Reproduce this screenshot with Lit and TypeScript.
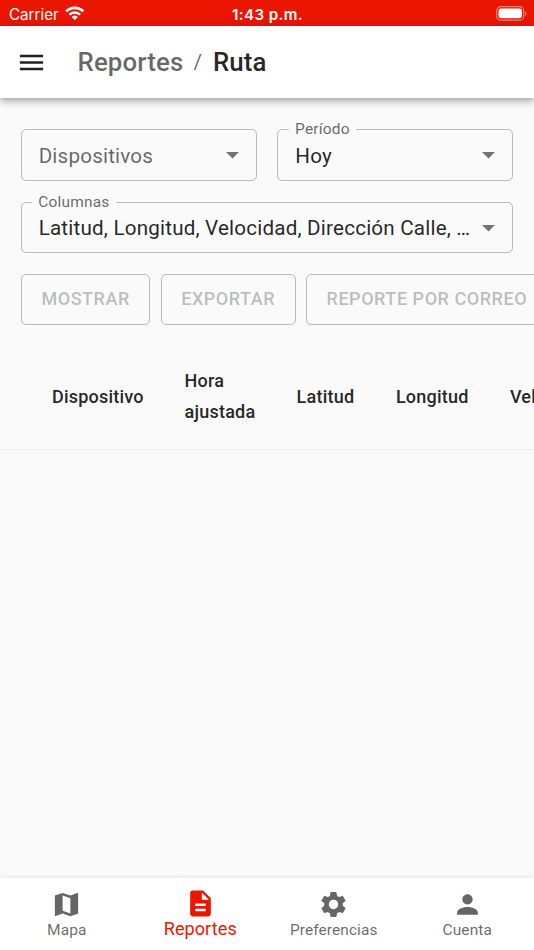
import { LitElement, html, css, svg, nothing } from "lit";
import { customElement, property } from "lit/decorators.js";
import { classMap } from "lit/directives/class-map.js";

const ICONS = {
  menu: "M3 18h18v-2H3v2zm0-5h18v-2H3v2zm0-7v2h18V6H3z",
  map: "m20.5 3-.16.03L15 5.1 9 3 3.36 4.9c-.21.07-.36.25-.36.48V20.500c0 .28.22.5.5.5l.16-.03L9 18.900l6 2.100 5.640-1.900c.21-.07.36-.25.36-.48V3.500c0-.28-.22-.5-.5-.5zM15 19l-6-2.110V5l6 2.110V19z",
  report: "M14 2H6c-1.100 0-1.990.9-1.990 2L4 20c0 1.100.89 2 1.990 2H18c1.100 0 2-.9 2-2V8l-6-6zm2 16H8v-2h8v2zm0-4H8v-2h8v2zm-3-5V3.500L18.500 9H13z",
  settings: "M19.140 12.940c.04-.3.060-.61.060-.94 0-.32-.02-.64-.07-.94l2.030-1.580c.18-.14.23-.41.12-.61l-1.920-3.320c-.12-.22-.37-.29-.59-.22l-2.390.96c-.5-.38-1.030-.7-1.620-.94l-.36-2.540c-.04-.24-.24-.41-.48-.41h-3.840c-.24 0-.43.17-.47.41l-.36 2.540c-.59.24-1.130.57-1.620.94l-2.390-.96c-.22-.08-.47 0-.59.22L2.740 8.870c-.12.21-.08.47.12.61l2.030 1.580c-.05.3-.09.63-.09.94s.02.64.07.94l-2.030 1.580c-.18.14-.23.41-.12.61l1.920 3.320c.12.22.37.29.59.22l2.390-.96c.5.38 1.030.7 1.620.94l.36 2.540c.05.24.24.41.48.41h3.840c.24 0 .44-.17.47-.41l.36-2.540c.59-.24 1.130-.56 1.620-.94l2.390.96c.22.08.47 0 .59-.22l1.920-3.320c.12-.22.07-.47-.12-.61l-2.010-1.580zM12 15.600c-1.980 0-3.600-1.620-3.600-3.600s1.620-3.600 3.600-3.600 3.600 1.620 3.600 3.600-1.620 3.600-3.600 3.600z",
  person: "M12 12c2.210 0 4-1.790 4-4s-1.790-4-4-4-4 1.790-4 4 1.790 4 4 4zm0 2c-2.670 0-8 1.340-8 4v2h16v-2c0-2.660-5.330-4-8-4z",
  arrow: "M7 10l5 5 5-5z",
};

const icon = (name: keyof typeof ICONS) =>
  html`<svg class="icon" viewBox="0 0 24 24" aria-hidden="true">${svg`<path d=${ICONS[name]}></path>`}</svg>`;

@customElement("status-bar")
class StatusBar extends LitElement {
  static styles = css`
    :host {
      display: grid;
      grid-template-columns: 1fr auto 1fr;
      align-items: center;
      height: 26px;
      padding: 0 8px 0 9px;
      box-sizing: border-box;
      background: #ea1600;
      color: #fff;
      font: 400 15.200px/26px Inter, "Liberation Sans", sans-serif;
    }
    .carrier { display: flex; align-items: center; gap: 6px; padding-top: 1px; }
    .wifi { width: 19.500px; height: 14.600px; display: block; margin-top: -2px; }
    .time { font-weight: 600; letter-spacing: 0.380px; padding-top: 2px; }
    .battery { justify-self: end; width: 31px; height: 15px; display: block; margin: -1px -0.500px 0 0; }
  `;
  render() {
    return html`
      <div class="carrier">
        <span>Carrier</span>
        <svg class="wifi" viewBox="0 0 20 15">
          <g fill="none" stroke="#fff" stroke-width="2.700">
            <path d="M1.200 5.500a12.600 12.600 0 0 1 17.600 0"></path>
            <path d="M4.500 8.900a7.900 7.900 0 0 1 11 0"></path>
          </g>
          <path fill="#fff" d="M6.700 11.200a4.800 4.800 0 0 1 6.600 0L10 14.500z"></path>
        </svg>
      </div>
      <span class="time">1:43 p.m.</span>
      <svg class="battery" viewBox="0 0 31 15">
        <rect x=".7" y=".7" width="27" height="13.400" rx="3.800" fill="none" stroke="#fff" stroke-opacity=".45" stroke-width="1.200"></rect>
        <rect x="2.500" y="2.500" width="23.400" height="9.800" rx="2.200" fill="#fff"></rect>
        <path d="M29.200 5.200c1.700.7 1.700 3.800 0 4.600z" fill="#fff" fill-opacity=".5"></path>
      </svg>
    `;
  }
}

@customElement("select-field")
class SelectField extends LitElement {
  @property() label = "";
  @property() value = "";
  static styles = css`
    :host { display: block; position: relative; min-width: 0; height: 51.600px; }
    .outline {
      position: absolute;
      inset: -8px 0 0;
      margin: 0;
      padding: 0 10.300px;
      border: 1.290px solid rgba(0, 0, 0, 0.25);
      border-radius: 5.200px;
      min-width: 0;
    }
    .outline.plain { top: 0; }
    legend {
      padding: 0 6.450px;
      height: 17px;
      font-size: 15.480px;
      line-height: 17px;
      letter-spacing: 0.180px;
      color: rgba(0, 0, 0, 0.6);
      white-space: nowrap;
    }
    .content {
      display: flex;
      align-items: center;
      height: 100%;
      box-sizing: border-box;
      padding: 0 9px 0 18px;
      gap: 2.500px;
    }
    .value {
      flex: 1;
      min-width: 0;
      overflow: hidden;
      text-overflow: ellipsis;
      white-space: nowrap;
      font-size: 20.640px;
      line-height: 30px;
      letter-spacing: 0.194px;
      padding-top: 1.600px;
      color: rgba(0, 0, 0, 0.87);
    }
    .placeholder { color: rgba(0, 0, 0, 0.6); }
    .icon { width: 31px; height: 31px; flex: none; fill: rgba(0, 0, 0, 0.54); }
  `;
  render() {
    const empty = !this.value;
    return html`
      <fieldset class=${classMap({ outline: true, plain: empty })}>
        ${empty ? nothing : html`<legend>${this.label}</legend>`}
      </fieldset>
      <div class="content">
        <span class=${classMap({ value: true, placeholder: empty })}>${this.value || this.label}</span>
        ${icon("arrow")}
      </div>
    `;
  }
}

@customElement("app-root")
class AppRoot extends LitElement {
  static styles = css`
    :host {
      display: flex;
      flex-direction: column;
      height: 950px;
      width: 534px;
      overflow: hidden;
      background: #fafafa;
      color: rgba(0, 0, 0, 0.87);
      font-family: Roboto, "Liberation Sans", sans-serif;
    }
    .icon { width: 31px; height: 31px; fill: currentColor; display: block; flex: none; }
    .toolbar {
      display: flex;
      align-items: center;
      height: 72.200px;
      flex: none;
      padding-left: 15.500px;
      gap: 31px;
      background: #fff;
      box-shadow: 0 2.600px 5.200px -1.300px rgba(0, 0, 0, 0.2), 0 5.200px 6.500px 0 rgba(0, 0, 0, 0.14),
        0 1.300px 13px 0 rgba(0, 0, 0, 0.12);
      z-index: 1;
    }
    .crumbs {
      display: flex;
      align-items: center;
      font-weight: 500;
      font-size: 25.800px;
      line-height: 41px;
      letter-spacing: 0.160px;
      padding-top: 1px;
    }
    .parent { color: rgba(0, 0, 0, 0.6); }
    .slash { font-weight: 400; font-size: 20.640px; margin: 0 10.700px 0 10.200px; color: rgba(0, 0, 0, 0.6); }
    .filters {
      display: grid;
      grid-template-columns: 1fr 1fr;
      gap: 21px 20.700px;
      padding: 31px 20.640px 0;
      flex: none;
    }
    .wide { grid-column: 1 / -1; }
    .actions { display: flex; gap: 10.400px; padding: 20.400px 0 0 20.900px; flex: none; }
    .action {
      flex: none;
      height: 51.600px;
      box-sizing: border-box;
      padding: 0 19.500px 2px;
      border: 1.290px solid rgba(0, 0, 0, 0.26);
      border-radius: 5.200px;
      background: none;
      color: rgba(0, 0, 0, 0.26);
      font: 500 18.060px/31px Roboto, "Liberation Sans", sans-serif;
      letter-spacing: 0.516px;
      text-transform: uppercase;
      white-space: nowrap;
    }
    .table-head {
      display: grid;
      grid-template-columns: 132.700px 112px 99.300px 114px 140px;
      align-items: center;
      flex: none;
      height: 103.700px;
      box-sizing: border-box;
      margin-top: 20.600px;
      padding-left: 31.300px;
      border-bottom: 1.290px solid #efefef;
      font-weight: 500;
      font-size: 18.060px;
      line-height: 30.960px;
      letter-spacing: 0.193px;
    }
    .cell { padding: 0 20.640px; }
    .space { flex: 1; }
    .nav {
      display: grid;
      grid-template-columns: repeat(4, 1fr);
      height: 72.300px;
      flex: none;
      background: #fff;
      box-shadow: 0 -1px 5px rgba(0, 0, 0, 0.08);
    }
    .tab {
      display: flex;
      flex-direction: column;
      align-items: center;
      padding-top: 11px;
      color: rgba(0, 0, 0, 0.6);
      font-size: 15.480px;
      line-height: 20px;
      letter-spacing: 0.080px;
    }
    .tab.selected { color: #ea1600; font-size: 18.060px; padding-top: 10px; }
  `;

  private tabs: { icon: keyof typeof ICONS; label: string; selected?: boolean }[] = [
    { icon: "map", label: "Mapa" },
    { icon: "report", label: "Reportes", selected: true },
    { icon: "settings", label: "Preferencias" },
    { icon: "person", label: "Cuenta" },
  ];

  render() {
    return html`
      <status-bar></status-bar>
      <header class="toolbar">
        ${icon("menu")}
        <div class="crumbs">
          <span class="parent">Reportes</span><span class="slash">/</span><span>Ruta</span>
        </div>
      </header>
      <section class="filters">
        <select-field label="Dispositivos"></select-field>
        <select-field label="Período" value="Hoy"></select-field>
        <select-field class="wide" label="Columnas" value="Latitud, Longitud, Velocidad, Dirección Calle, Kilometraje"></select-field>
      </section>
      <div class="actions">
        ${["Mostrar", "Exportar", "Reporte por correo"].map((t) => html`<button class="action" disabled>${t}</button>`)}
      </div>
      <div class="table-head">
        ${["Dispositivo", "Hora ajustada", "Latitud", "Longitud", "Velocidad"].map((t) => html`<div class="cell">${t}</div>`)}
      </div>
      <div class="space"></div>
      <nav class="nav">
        ${this.tabs.map(
          (t) => html`<div class=${classMap({ tab: true, selected: !!t.selected })}>${icon(t.icon)}<span>${t.label}</span></div>`
        )}
      </nav>
    `;
  }
}
